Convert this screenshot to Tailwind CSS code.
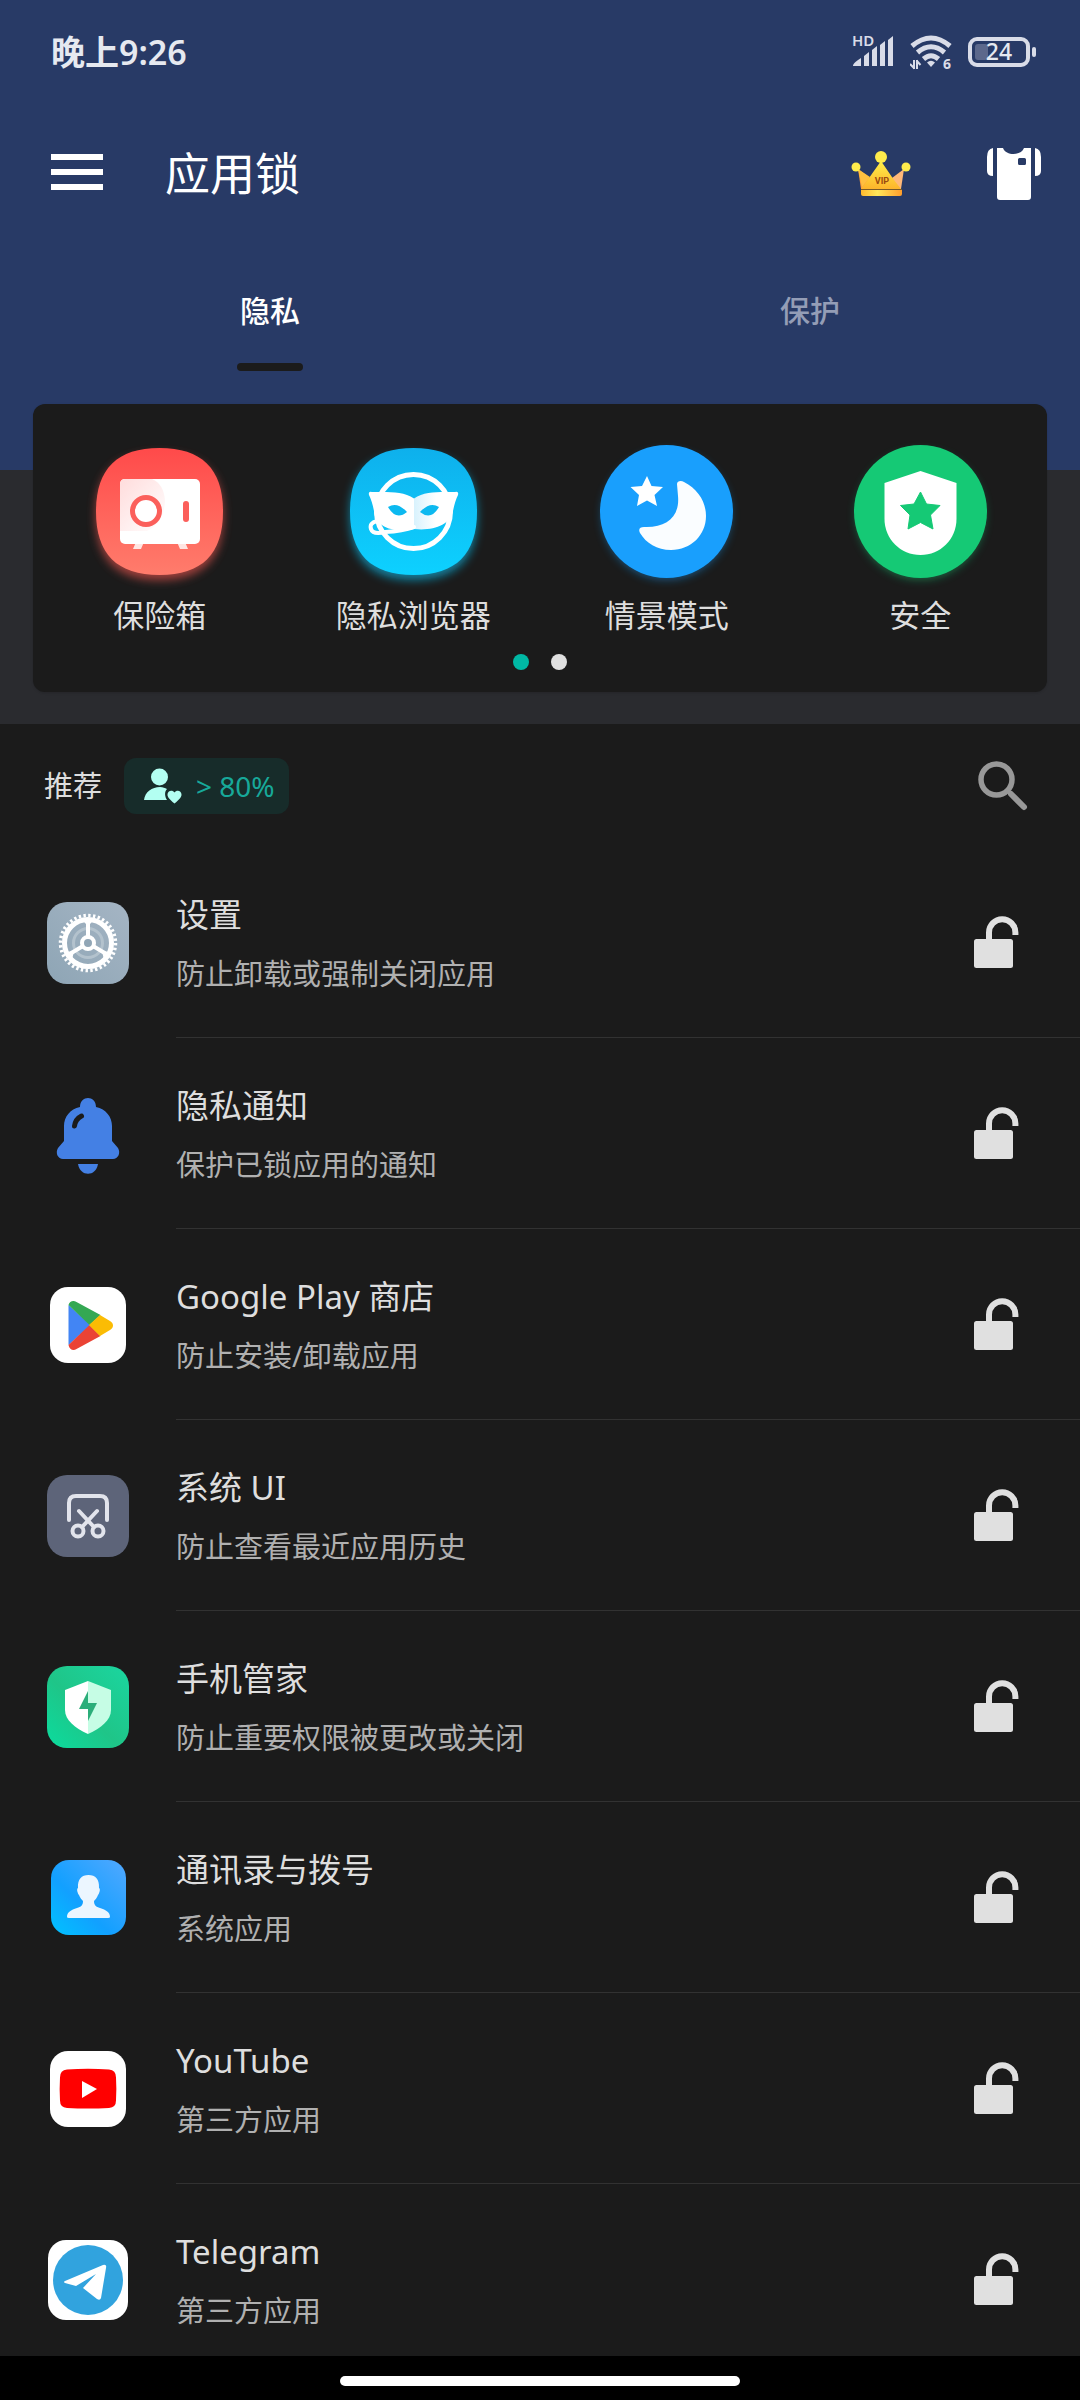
<!DOCTYPE html>
<html lang="zh-CN">
  <head>
    <meta charset="UTF-8" />
    <meta name="viewport" content="width=device-width, initial-scale=1.0" />
    <title>应用锁</title>
    <script src="https://cdn.jsdelivr.net/npm/@tailwindcss/browser@4"></script>
  </head>
  <body
    class="flex h-screen flex-col overflow-hidden bg-[#1b1b1b] font-['Noto_Sans','Noto_Sans_CJK_SC',sans-serif] text-[#dedede]"
  >
    <!-- Shared symbols -->
    <svg class="hidden">
      <symbol id="unlocked" viewBox="0 0 45 52">
        <rect x="0" y="23" width="39" height="29" rx="2.5" fill="#e0e0e0" />
        <path d="M15 25v-8.500a13.200 13.200 0 0 1 26.400 0V19" fill="none" stroke="#e0e0e0" stroke-width="6" />
      </symbol>
    </svg>

    <!-- Blue header -->
    <header class="h-[470px] shrink-0 bg-[#283a66]">
      <!-- Status bar -->
      <div class="flex h-[104px] items-center justify-between pr-11 pl-[51px] text-[#e6e9f0]">
        <span class="text-[34px] leading-10 font-semibold">晚上9:26</span>
        <div class="flex items-center gap-4">
          <svg class="h-10 w-[42px]" viewBox="0 -2 42 40" fill="#d9dce8">
            <text x="0" y="12" font-size="15" font-weight="600" font-family="Noto Sans, sans-serif">HD</text>
            <path d="M1 32c0-3 4-5 8-8v8zM12 32V22l5-4v14zM20 32V16l5-4v20zM28 32V11l5-4v25zM36 32V6l5-4v30z" />
          </svg>
          <svg class="h-10 w-[42px]" viewBox="0 -2 42 40" fill="none" stroke="#d9dce8">
            <path d="M2 12Q21-4 40 12M7.500 18.500Q21 7 34.500 18.500M13.500 25Q21 18.500 28.500 25" stroke-width="5" />
            <path d="M17 28.500q4-3.500 8 0L21 33z" fill="#d9dce8" stroke="none" />
            <path d="M4 26v9M4.500 34.500L0 30M7 35v-9M6.500 26.500L10.500 31" stroke-width="2" />
            <text x="33" y="35" font-size="14" font-weight="700" fill="#d9dce8" stroke="none" font-family="Noto Sans, sans-serif">6</text>
          </svg>
          <svg class="h-9 w-[68px]" viewBox="0 0 68 36">
            <rect x="2" y="5" width="58" height="26" rx="7" fill="none" stroke="#d9dce8" stroke-width="4" />
            <rect x="7" y="10" width="13" height="16" rx="3" fill="#5c688b" />
            <rect x="64" y="13" width="4" height="10" rx="2" fill="#d9dce8" />
            <text x="31" y="26" font-size="23" font-weight="500" text-anchor="middle" fill="#e6e9f0" font-family="Noto Sans, sans-serif">24</text>
          </svg>
        </div>
      </div>

      <!-- App bar -->
      <div class="flex h-[136px] items-center pr-[38px] pl-[51px]">
        <button aria-label="菜单">
          <svg class="h-9 w-[52px]" viewBox="0 0 52 36" fill="#fff">
            <path d="M0 0h52v6H0zM0 15h52v6H0zM0 30h52v6H0z" />
          </svg>
        </button>
        <h1 class="ml-[62px] flex-1 pt-1 text-[45px] leading-[56px] text-white">应用锁</h1>
        <button class="pt-1" aria-label="VIP">
          <svg class="h-[46px] w-[60px]" viewBox="0 0 60 46">
            <defs>
              <linearGradient id="gold" x1="0" x2="0" y1="0" y2="1">
                <stop offset="0" stop-color="#fff04a" />
                <stop offset="1" stop-color="#fdb42b" />
              </linearGradient>
              <linearGradient id="band">
                <stop offset="0" stop-color="#ffb92e" />
                <stop offset=".4" stop-color="#ffe75a" />
                <stop offset="1" stop-color="#ff9d2c" />
              </linearGradient>
            </defs>
            <path d="M7 18l12 9 5 11H10z" fill="#ff9f38" />
            <path d="M53 18l-12 9-5 11h14z" fill="#ffb878" />
            <path d="M30 10l13 19 7 9H10l8-11z" fill="url(#gold)" />
            <path d="M7 18l12 8-8 10z" fill="#ffc040" />
            <path d="M10 39h41v4q0 2-2 2H12q-2 0-2-2z" fill="url(#band)" />
            <path d="M10 38.500h41" stroke="#7a5a28" />
            <circle cx="30" cy="6" r="6" fill="#ffec4c" />
            <circle cx="5" cy="16" r="4.500" fill="#ffec4c" />
            <circle cx="55" cy="16" r="4.500" fill="#ffec4c" />
            <text x="31" y="33" font-size="9" font-weight="700" text-anchor="middle" fill="#9b4a10" font-family="Roboto, sans-serif">VIP</text>
          </svg>
        </button>
        <button class="ml-[75px] pt-1" aria-label="主题">
          <svg class="h-[54px] w-[56px]" viewBox="0 0 56 54" fill="#fff">
            <path
              fill-rule="evenodd"
              d="M11 1h6c3 8 18 8 21 0h7v49a3 3 0 0 1-3 3H14a3 3 0 0 1-3-3zM32 12.500v4q0 1.500 1.500 1.500h5q1.500 0 1.500-1.500v-4q0-1.500-1.500-1.500h-5q-1.500 0-1.500 1.500z"
            />
            <path d="M7 1v28Q1 29 1 24V10Q1 2 7 1zM49 1v28q6 0 6-5V10q0-8-6-9z" />
          </svg>
        </button>
      </div>

      <!-- Tabs -->
      <nav class="grid grid-cols-2 text-[30px] leading-10 font-medium">
        <a href="#privacy" class="flex flex-col items-center gap-8 pt-[51px] text-white">
          隐私
          <span class="h-2 w-[66px] rounded-full bg-[#1b1b1b]"></span>
        </a>
        <a href="#protect" class="pt-[51px] text-center text-[#949db6]">保护</a>
      </nav>
    </header>

    <!-- Feature card, overlaps the header -->
    <section class="shrink-0 bg-[#2a2b2f] px-[33px] pb-8">
      <div class="relative -mt-[66px] rounded-xl bg-[#1b1b1b] pt-[41px] pb-[22px] shadow-sm">
        <div class="grid grid-cols-4 text-[31px] leading-[42px]">
          <a href="#vault" class="flex flex-col items-center gap-4">
            <svg class="size-[133px] overflow-visible" viewBox="0 0 133 133">
              <defs>
                <linearGradient id="red" x1="0" x2="0" y1="0" y2="1">
                  <stop offset="0" stop-color="#ff4a4a" />
                  <stop offset="1" stop-color="#ff7c6c" />
                </linearGradient>
                <linearGradient id="pink" x1="0" x2="1" y1="0" y2="1">
                  <stop offset="0" stop-color="#ffdcdc" />
                  <stop offset="1" stop-color="#fff" />
                </linearGradient>
                <filter id="glow" x="-20%" y="-20%" width="140%" height="150%">
                  <feGaussianBlur stdDeviation="5" />
                </filter>
              </defs>
              <path d="M66.500 9C110 9 130 28 130 71S110 135 66.500 135 3 114 3 71 23 9 66.500 9z" fill="#ff5c55" opacity=".6" filter="url(#glow)" />
              <path d="M66.500 3C109 3 130 24 130 66.500S109 130 66.500 130 3 109 3 66.500 24 3 66.500 3z" fill="url(#red)" />
              <path d="M43 97h8l-3 7h-8zM84 97h8l3 7h-8z" fill="#ffe5e2" />
              <rect x="27" y="34" width="80" height="65" rx="5" fill="#fff" />
              <path d="M27 39q0-5 5-5h27q12 5 13 22-1 22-18 30H27z" fill="url(#pink)" />
              <circle cx="53" cy="66" r="13.500" fill="#fff" stroke="#fb5f5b" stroke-width="5" />
              <rect x="90" y="56" width="6" height="21" rx="3" fill="#fb5f5b" />
            </svg>
            保险箱
          </a>
          <a href="#browser" class="flex flex-col items-center gap-4">
            <svg class="size-[133px] overflow-visible" viewBox="0 0 133 133">
              <defs>
                <linearGradient id="cyan" x1="0" x2="0" y1="0" y2="1">
                  <stop offset="0" stop-color="#0eb0ec" />
                  <stop offset="1" stop-color="#0dd1ff" />
                </linearGradient>
                <linearGradient id="mask">
                  <stop offset="0" stop-color="#d8f2fd" />
                  <stop offset=".5" stop-color="#fff" />
                </linearGradient>
              </defs>
              <path d="M66.500 9C110 9 130 28 130 71S110 135 66.500 135 3 114 3 71 23 9 66.500 9z" fill="#0cc4f6" opacity=".6" filter="url(#glow)" />
              <path d="M66.500 3C109 3 130 24 130 66.500S109 130 66.500 130 3 109 3 66.500 24 3 66.500 3z" fill="url(#cyan)" />
              <circle cx="66.500" cy="66.500" r="37" fill="none" stroke="#fff" stroke-width="5" />
              <path
                d="M67 53.500C56 46 41 47 25 47q-4-1-3 3 3 6 5 16c0 15 20 23 40 18z"
                fill="#fff"
              />
              <path
                d="M67 53.500C78 46 92 47 108 47q4-1 3 3-3 6-5 16c-3 14-19 20-39 18z"
                fill="url(#mask)"
              />
              <path d="M41 62q9-6 19 5-11 9-19-5zM92 62q-9-6-19 5 11 9 19-5z" fill="#0cb9f0" />
              <path d="M30 76q-8 2-6 8t14 3q18-1 29-5" fill="none" stroke="#fff" stroke-width="4" stroke-linecap="round" />
            </svg>
            隐私浏览器
          </a>
          <a href="#profiles" class="flex flex-col items-center gap-4">
            <svg class="size-[133px] overflow-visible" viewBox="0 0 133 133">
              <circle cx="66.500" cy="70" r="64" fill="#199efc" opacity=".5" filter="url(#glow)" />
              <circle cx="66.500" cy="66.500" r="66.500" fill="#199ffd" />
              <path d="M47 31l4.500 10 11.500 1-8.500 8 2.500 11-10-5.500L37 61l2-11-8.500-8L42 41z" fill="#fff" />
              <path
                d="M77 39c0-3 4-4 7-2 14 7 22 20 22 34 0 19-15 34-35 34-14 0-25-7-31-17-2-4 0-6 4-6 22 1 36-10 34-31z"
                fill="#fafdff"
              />
            </svg>
            情景模式
          </a>
          <a href="#security" class="flex flex-col items-center gap-4">
            <svg class="size-[133px] overflow-visible" viewBox="0 0 133 133">
              <circle cx="66.500" cy="70" r="64" fill="#15c975" opacity=".5" filter="url(#glow)" />
              <circle cx="66.500" cy="66.500" r="66.500" fill="#15c975" />
              <path d="M66.500 26l36 12v36c0 20-16 36-36 36s-36-16-36-36V38z" fill="#fff" />
              <path
                d="M66.500 47l6 12 13.500 1.500-9.500 9.500 2.500 14-12.500-6.500L54 84l2-14-9.500-9.500L60 59z"
                fill="#15c975"
                stroke="#15c975"
                stroke-linejoin="round"
              />
            </svg>
            安全
          </a>
        </div>
        <div class="mt-[18px] flex justify-center gap-[22px]">
          <span class="size-4 rounded-full bg-[#00b8a4]"></span>
          <span class="size-4 rounded-full bg-[#e0e0e0]"></span>
        </div>
      </div>
    </section>

    <!-- App list -->
    <main class="flex-1 overflow-y-auto [scrollbar-width:none]">
      <div class="flex h-[123px] items-center pr-[52px] pl-11">
        <h2 class="text-[29px] leading-10">推荐</h2>
        <div class="ml-[22px] flex h-14 items-center gap-[14px] rounded-xl bg-[#172c2a] pr-[14px] pl-5 text-[28px] text-[#17a99a]">
          <svg class="h-9 w-[38px]" viewBox="0 0 38 36" fill="#b3fff2">
            <circle cx="15.500" cy="9" r="8.500" />
            <path d="M0 32c1-8 8-13 16-13 3 0 5 1 7 2-3 3-2 8 0 11z" />
            <path d="M30.500 35.500C25 31 23.500 29 23.500 26.500c0-4 5-5 7-2 2-3 7-2 7 2 0 2.500-1.500 4.500-7 9z" />
          </svg>
          &gt; 80%
        </div>
        <button class="ml-auto" aria-label="搜索">
          <svg class="h-[50px] w-[50px]" viewBox="0 0 50 50" fill="none" stroke="#989898">
            <circle cx="18.500" cy="18.500" r="15.500" stroke-width="5.500" />
            <path d="M33 33l13 13" stroke-width="6" stroke-linecap="round" />
            <path d="M29 29l5 5" stroke-width="4" />
          </svg>
        </button>
      </div>

      <ul>
        <li class="flex items-stretch">
          <div class="flex w-44 shrink-0 items-center justify-center">
            <svg class="size-[82px]" viewBox="0 0 82 82">
              <defs>
                <linearGradient id="steel" x1="1" x2="0" y1="0" y2="1">
                  <stop offset="0" stop-color="#a5b5c4" />
                  <stop offset="1" stop-color="#8ea5b5" />
                </linearGradient>
              </defs>
              <rect width="82" height="82" rx="20" fill="url(#steel)" />
              <circle cx="41" cy="41" r="14.500" fill="none" stroke="#b3c2cd" stroke-width="3" />
              <circle cx="41" cy="41" r="27.500" fill="none" stroke="#fff" stroke-width="3.500" stroke-dasharray="2.400 2.400" />
              <circle cx="41" cy="41" r="23.500" fill="none" stroke="#fff" stroke-width="5" />
              <path d="M41 35V18M46 44l15 9M36 44l-15 9" stroke="#fff" stroke-width="4" />
              <path d="M36 18.500h10l-5 6zM57 58l5-8-7-1zM25 58l-5-8 7-1z" fill="#fff" />
              <circle cx="41" cy="41" r="6" fill="#91a6b6" stroke="#fff" stroke-width="4" />
            </svg>
          </div>
          <div class="flex flex-1 items-center justify-between border-b border-[#323232] pr-[61px]">
            <div class="flex flex-col gap-[13px] pt-11 pb-[41px]">
              <h3 class="text-[33px] leading-[48px]">设置</h3>
              <p class="text-[29px] leading-[44px] text-[#b0b0b0]">防止卸载或强制关闭应用</p>
            </div>
            <button aria-label="锁定 设置"><svg class="h-[52px] w-[45px]"><use href="#unlocked" /></svg></button>
          </div>
        </li>

        <li class="flex items-stretch">
          <div class="flex w-44 shrink-0 items-center justify-center">
            <svg class="size-[82px]" viewBox="0 0 82 82" fill="#4480e4">
              <path d="M33 14c0-12 16-12 16 0 10 2 16 10 16 19v15l6 7c3 5 0 11-5 11H16c-5 0-8-6-5-11l6-7V33c0-9 6-17 16-19z" />
              <path d="M31 71h20c-2 13-18 13-20 0z" />
              <path d="M27.500 33q1-7 7-10" fill="none" stroke="#1b1b1b" stroke-width="5" stroke-linecap="round" />
            </svg>
          </div>
          <div class="flex flex-1 items-center justify-between border-b border-[#323232] pr-[61px]">
            <div class="flex flex-col gap-[13px] pt-11 pb-[41px]">
              <h3 class="text-[33px] leading-[48px]">隐私通知</h3>
              <p class="text-[29px] leading-[44px] text-[#b0b0b0]">保护已锁应用的通知</p>
            </div>
            <button aria-label="锁定 隐私通知"><svg class="h-[52px] w-[45px]"><use href="#unlocked" /></svg></button>
          </div>
        </li>

        <li class="flex items-stretch">
          <div class="flex w-44 shrink-0 items-center justify-center">
            <svg class="size-[76px]" viewBox="0 0 76 76">
              <rect width="76" height="76" rx="18" fill="#fff" />
              <path d="M18.500 18v40l22-20z" fill="#4285f4" />
              <path d="M18.500 18c1-4 5-5 8-3l24 13-11 10z" fill="#34a853" />
              <path d="M18.500 58c1 5 5 6 8 4l24-13-11-11z" fill="#ea4335" />
              <path d="M50 28l10 6c4 2 4 7 0 9l-10 6-11-11z" fill="#fbbc04" />
            </svg>
          </div>
          <div class="flex flex-1 items-center justify-between border-b border-[#323232] pr-[61px]">
            <div class="flex flex-col gap-[13px] pt-11 pb-[41px]">
              <h3 class="text-[33px] leading-[48px]">Google Play 商店</h3>
              <p class="text-[29px] leading-[44px] text-[#b0b0b0]">防止安装/卸载应用</p>
            </div>
            <button aria-label="锁定 Google Play 商店"><svg class="h-[52px] w-[45px]"><use href="#unlocked" /></svg></button>
          </div>
        </li>

        <li class="flex items-stretch">
          <div class="flex w-44 shrink-0 items-center justify-center">
            <svg class="size-[82px]" viewBox="0 0 82 82">
              <rect width="82" height="82" rx="20" fill="#5d6479" />
              <g fill="none" stroke="#e2e4ec" stroke-width="4" stroke-linecap="round">
                <path d="M22 45V28q0-7 7-7h24q7 0 7 7v17" />
                <circle cx="31" cy="56" r="5.500" />
                <circle cx="51" cy="56" r="5.500" />
                <path d="M32 36l15 16M50 36L35 52" />
              </g>
            </svg>
          </div>
          <div class="flex flex-1 items-center justify-between border-b border-[#323232] pr-[61px]">
            <div class="flex flex-col gap-[13px] pt-11 pb-[41px]">
              <h3 class="text-[33px] leading-[48px]">系统 UI</h3>
              <p class="text-[29px] leading-[44px] text-[#b0b0b0]">防止查看最近应用历史</p>
            </div>
            <button aria-label="锁定 系统 UI"><svg class="h-[52px] w-[45px]"><use href="#unlocked" /></svg></button>
          </div>
        </li>

        <li class="flex items-stretch">
          <div class="flex w-44 shrink-0 items-center justify-center">
            <svg class="size-[82px]" viewBox="0 0 82 82">
              <defs>
                <linearGradient id="mint" x1="0" x2="1" y1="1" y2="0">
                  <stop offset="0" stop-color="#0bdc9e" />
                  <stop offset=".45" stop-color="#1fc588" />
                  <stop offset="1" stop-color="#1bd6a0" />
                </linearGradient>
              </defs>
              <rect width="82" height="82" rx="20" fill="url(#mint)" />
              <path d="M41 15l-23 9v20c0 10 10 18 23 24z" fill="#fff" />
              <path d="M41 15l23 9v20c0 10-10 18-23 24z" fill="#c6fde5" />
              <path d="M41 25L32 43h9v12l9-18h-9z" fill="#2bae7a" />
            </svg>
          </div>
          <div class="flex flex-1 items-center justify-between border-b border-[#323232] pr-[61px]">
            <div class="flex flex-col gap-[13px] pt-11 pb-[41px]">
              <h3 class="text-[33px] leading-[48px]">手机管家</h3>
              <p class="text-[29px] leading-[44px] text-[#b0b0b0]">防止重要权限被更改或关闭</p>
            </div>
            <button aria-label="锁定 手机管家"><svg class="h-[52px] w-[45px]"><use href="#unlocked" /></svg></button>
          </div>
        </li>

        <li class="flex items-stretch">
          <div class="flex w-44 shrink-0 items-center justify-center">
            <svg class="size-[75px]" viewBox="0 0 75 75">
              <defs>
                <linearGradient id="sky" x1="0" x2="1" y1="1" y2="0">
                  <stop offset="0" stop-color="#00c3ff" />
                  <stop offset=".4" stop-color="#12a0ff" />
                  <stop offset="1" stop-color="#52a8ff" />
                </linearGradient>
              </defs>
              <rect width="75" height="75" rx="18" fill="url(#sky)" />
              <path
                d="M37.500 15c7 0 11 4 10.500 13 2 1 0 6-1 7-1 3-3 5-4 6 0 4 2 6 6 7 6 2 10 4 10 9q0 1-2 1H18q-2 0-2-1c0-5 4-7 10-9 4-1 6-3 6-7-1-1-3-3-4-6-1-1-3-6-1-7-.500-9 3.500-13 10.500-13z"
                fill="#ecf6ff"
              />
            </svg>
          </div>
          <div class="flex flex-1 items-center justify-between border-b border-[#323232] pr-[61px]">
            <div class="flex flex-col gap-[13px] pt-11 pb-[41px]">
              <h3 class="text-[33px] leading-[48px]">通讯录与拨号</h3>
              <p class="text-[29px] leading-[44px] text-[#b0b0b0]">系统应用</p>
            </div>
            <button aria-label="锁定 通讯录与拨号"><svg class="h-[52px] w-[45px]"><use href="#unlocked" /></svg></button>
          </div>
        </li>

        <li class="flex items-stretch">
          <div class="flex w-44 shrink-0 items-center justify-center">
            <svg class="size-[76px]" viewBox="0 0 76 76">
              <rect width="76" height="76" rx="18" fill="#fff" />
              <path d="M17 18.500q21-1.500 42 0 7 .500 7 8 .700 11 0 23 0 7-7 7.500-21 1-42 0-7-.500-7-7.500-.700-12 0-23 0-7.500 7-8z" fill="#f00" />
              <path d="M32 30l15 8-15 9z" fill="#fff" />
            </svg>
          </div>
          <div class="flex flex-1 items-center justify-between border-b border-[#323232] pr-[61px]">
            <div class="flex flex-col gap-[13px] pt-11 pb-[41px]">
              <h3 class="text-[33px] leading-[48px]">YouTube</h3>
              <p class="text-[29px] leading-[44px] text-[#b0b0b0]">第三方应用</p>
            </div>
            <button aria-label="锁定 YouTube"><svg class="h-[52px] w-[45px]"><use href="#unlocked" /></svg></button>
          </div>
        </li>

        <li class="flex items-stretch">
          <div class="flex w-44 shrink-0 items-center justify-center">
            <svg class="size-20" viewBox="0 0 80 80">
              <rect width="80" height="80" rx="18" fill="#fff" />
              <circle cx="40" cy="40" r="35" fill="#31a3de" />
              <path d="M17 41l38-16q4-1 3 3l-5 30q-1 3-4 1L35 48l13-14-20 12-11-3q-2-1 0-2z" fill="#fff" />
            </svg>
          </div>
          <div class="flex flex-1 items-center justify-between border-b border-[#323232] pr-[61px]">
            <div class="flex flex-col gap-[13px] pt-11 pb-[41px]">
              <h3 class="text-[33px] leading-[48px]">Telegram</h3>
              <p class="text-[29px] leading-[44px] text-[#b0b0b0]">第三方应用</p>
            </div>
            <button aria-label="锁定 Telegram"><svg class="h-[52px] w-[45px]"><use href="#unlocked" /></svg></button>
          </div>
        </li>
      </ul>
    </main>

    <!-- Gesture bar -->
    <footer class="flex h-11 shrink-0 justify-center bg-black pt-5">
      <div class="h-[10px] w-[37%] rounded-full bg-white"></div>
    </footer>
  </body>
</html>
